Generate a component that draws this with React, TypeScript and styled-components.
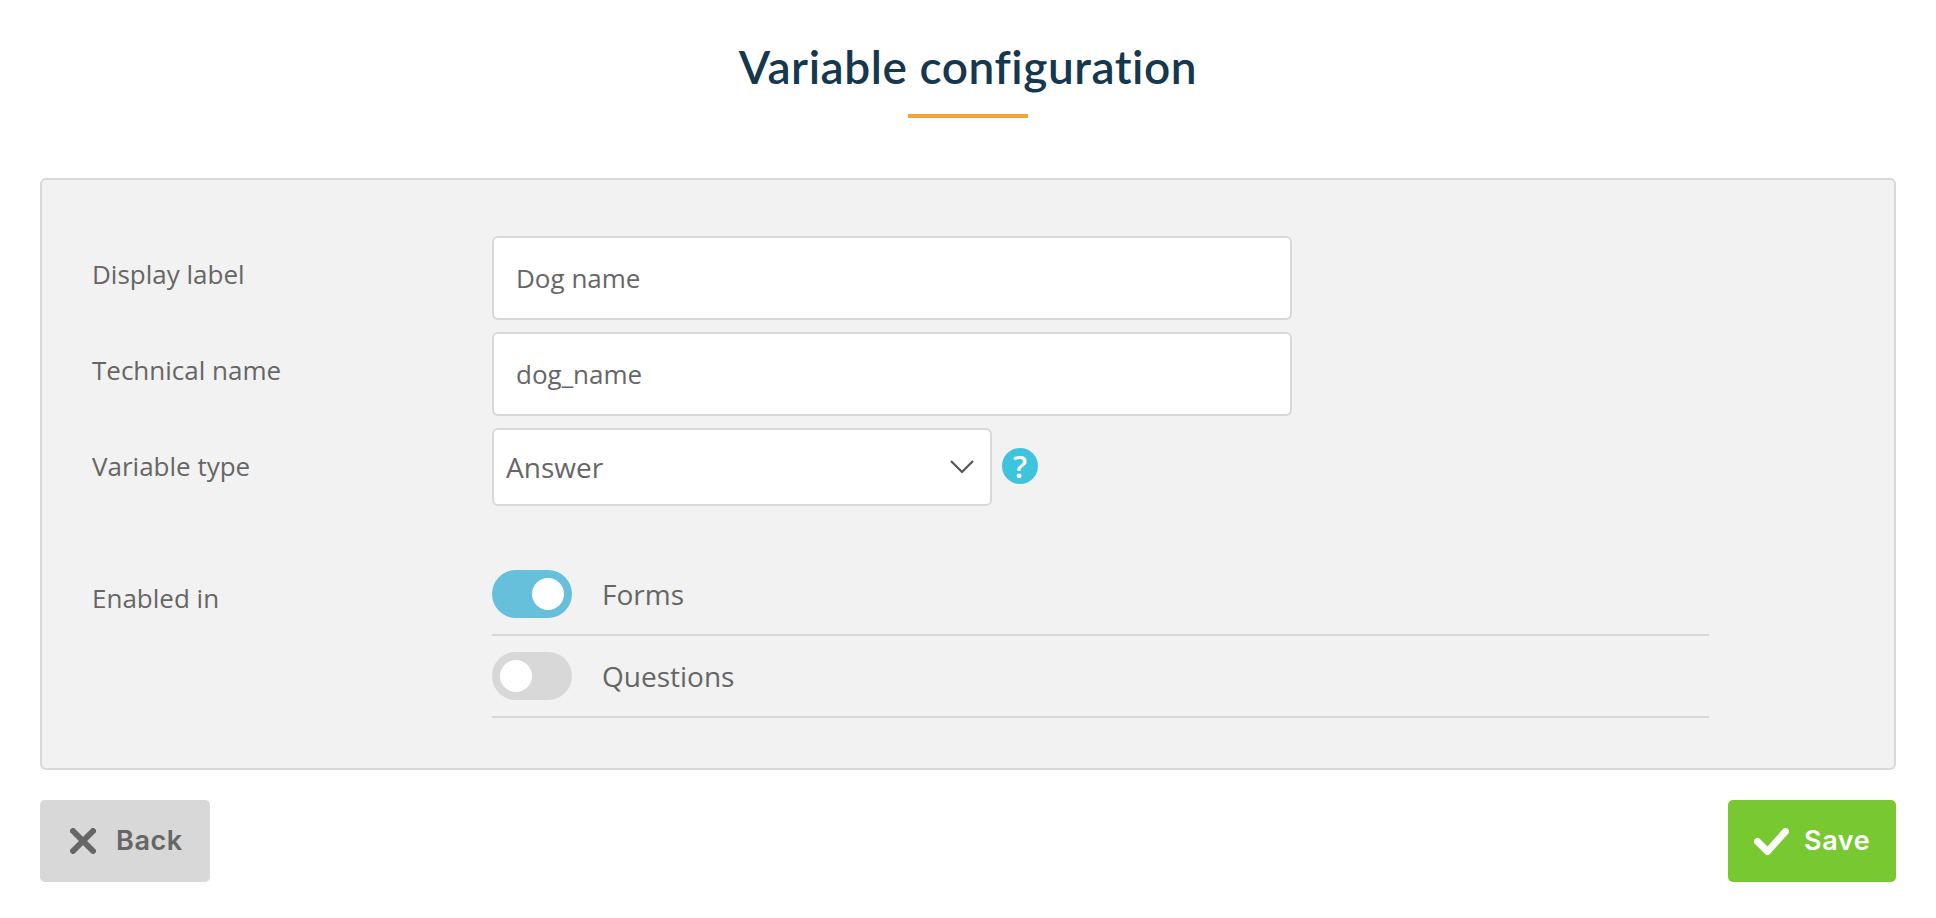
import React from "react";
import styled, { createGlobalStyle } from "styled-components";

const Global = createGlobalStyle`
  html, body { margin: 0; padding: 0; background: #fff; }
  body { font-family: "Open Sans", "Liberation Sans", sans-serif; color: #666; }
`;

const Page = styled.div`
  width: 1936px;
  height: 918px;
  padding: 0 40px;
  box-sizing: border-box;
  overflow: hidden;
`;

const Header = styled.header`
  height: 178px;
  display: flex;
  flex-direction: column;
  align-items: center;
  padding-top: 40px;
  box-sizing: border-box;
`;

const Title = styled.h1`
  margin: 0;
  font-family: Lato, "Liberation Sans", sans-serif;
  font-weight: 600;
  font-size: 46px;
  line-height: 54px;
  letter-spacing: 0.55px;
  font-variant-ligatures: none;
  color: #15384f;
`;

const TitleRule = styled.div`
  width: 120px;
  height: 4px;
  margin-top: 20px;
  background: #fb9f38;
`;

const Panel = styled.section`
  height: 592px;
  box-sizing: border-box;
  padding: 56px 50px 0;
  border: 2px solid #d8d8d8;
  border-radius: 6px;
  background: #f2f2f2;
`;

const Row = styled.div<{ $mb?: number }>`
  display: grid;
  grid-template-columns: 400px 1fr;
  margin-bottom: ${(p) => p.$mb ?? 12}px;
`;

const Label = styled.div<{ $pt: number }>`
  font-size: 26px;
  line-height: 35px;
  padding-top: ${(p) => p.$pt}px;
  color: #666;
`;

const TextBox = styled.div`
  width: 800px;
  height: 84px;
  box-sizing: border-box;
  display: flex;
  align-items: center;
  padding: 0 22px;
  border: 2px solid #d8d8d8;
  border-radius: 6px;
  background: #fff;
  font-size: 26px;
  color: #666;
`;

const SelectLine = styled.div`
  display: flex;
  align-items: flex-start;
  gap: 10px;
`;

const SelectBox = styled.div`
  width: 500px;
  height: 78px;
  box-sizing: border-box;
  display: flex;
  align-items: center;
  justify-content: space-between;
  padding: 0 16px 0 12px;
  border: 2px solid #d8d8d8;
  border-radius: 6px;
  background: #fff;
  font-size: 28px;
  color: #666;
`;

const HelpBadge = styled.div`
  width: 36px;
  height: 36px;
  margin-top: 20px;
  border-radius: 50%;
  background: #3fc4de;
  color: #fff;
  display: flex;
  align-items: center;
  justify-content: center;
  font-weight: 600;
  font-size: 31px;
  line-height: 1;
`;

const ToggleList = styled.div`
  width: 1217px;
`;

const ToggleRow = styled.div<{ $pt: number }>`
  display: flex;
  align-items: center;
  gap: 30px;
  padding: ${(p) => p.$pt}px 0 16px;
  border-bottom: 2px solid #d8d8d8;
  font-size: 28px;
  line-height: 38px;
  color: #666;
`;

const Toggle = styled.div<{ $on?: boolean }>`
  width: 80px;
  height: 48px;
  padding: 8px;
  box-sizing: border-box;
  border-radius: 24px;
  background: ${(p) => (p.$on ? "#66c0dc" : "#d8d8d8")};
  display: flex;
  justify-content: ${(p) => (p.$on ? "flex-end" : "flex-start")};
`;

const Knob = styled.div`
  width: 32px;
  height: 32px;
  border-radius: 50%;
  background: #fff;
`;

const Actions = styled.div`
  display: flex;
  justify-content: space-between;
  margin-top: 30px;
`;

const Button = styled.button<{ $primary?: boolean }>`
  height: 82px;
  width: ${(p) => (p.$primary ? 168 : 170)}px;
  border: 0;
  border-radius: 5px;
  display: flex;
  align-items: center;
  padding: 0 0 1px ${(p) => (p.$primary ? 26 : 30)}px;
  gap: ${(p) => (p.$primary ? 15 : 20)}px;
  background: ${(p) => (p.$primary ? "#78c832" : "#d8d8d8")};
  color: ${(p) => (p.$primary ? "#fff" : "#666")};
  font-family: Inter, "Liberation Sans", sans-serif;
  font-weight: 600;
  font-size: 27px;
  letter-spacing: 0.6px;
`;

const Chevron = () => (
  <svg width="24" height="14" viewBox="0 0 24 14" fill="none" stroke="#555" strokeWidth="2.2">
    <path d="M1 1l11 11L23 1" />
  </svg>
);

const Cross = () => (
  <svg width="26" height="26" viewBox="0 0 26 26" fill="none" stroke="#666" strokeWidth="6" strokeLinecap="round" style={{ marginTop: 1 }}>
    <path d="M3 3l20 20M23 3L3 23" />
  </svg>
);

const Check = () => (
  <svg width="35" height="27" viewBox="0 0 35 27" fill="none" stroke="#fff" strokeWidth="7" strokeLinecap="round" strokeLinejoin="round" style={{ marginTop: 1 }}>
    <path d="M3.5 13.5L13.5 23.5L31.5 3.5" />
  </svg>
);

export default function App() {
  return (
    <Page>
      <Global />
      <Header>
        <Title>Variable configuration</Title>
        <TitleRule />
      </Header>
      <Panel>
        <Row>
          <Label $pt={21}>Display label</Label>
          <TextBox>Dog name</TextBox>
        </Row>
        <Row>
          <Label $pt={21}>Technical name</Label>
          <TextBox>dog_name</TextBox>
        </Row>
        <Row $mb={64}>
          <Label $pt={21}>Variable type</Label>
          <SelectLine>
            <SelectBox>
              Answer
              <Chevron />
            </SelectBox>
            <HelpBadge>?</HelpBadge>
          </SelectLine>
        </Row>
        <Row>
          <Label $pt={11}>Enabled in</Label>
          <ToggleList>
            <ToggleRow $pt={0}>
              <Toggle $on>
                <Knob />
              </Toggle>
              Forms
            </ToggleRow>
            <ToggleRow $pt={16}>
              <Toggle>
                <Knob />
              </Toggle>
              Questions
            </ToggleRow>
          </ToggleList>
        </Row>
      </Panel>
      <Actions>
        <Button>
          <Cross />
          Back
        </Button>
        <Button $primary>
          <Check />
          Save
        </Button>
      </Actions>
    </Page>
  );
}
